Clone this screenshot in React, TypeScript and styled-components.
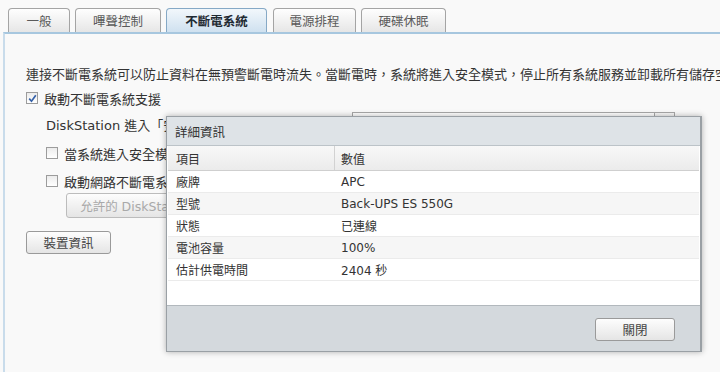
import styled, { createGlobalStyle } from "styled-components";

const GlobalStyle = createGlobalStyle`
  body {
    margin: 0;
    background: #f9f9f9;
    font-family: "DejaVu Sans", "Noto Sans CJK TC", sans-serif;
    color: #333;
  }
`;

const Page = styled.div`
  position: relative;
  width: 720px;
  height: 372px;
  overflow: hidden;
  padding: 8px 0 0 3px;
  box-sizing: border-box;
  font-size: 13px;
`;

const TabStrip = styled.div`
  display: flex;
  align-items: flex-end;
  padding-left: 5px;
  height: 24px;
`;

const Tab = styled.div<{ $w: number; $active?: boolean }>`
  width: ${(p) => p.$w}px;
  height: 24px;
  margin-right: ${(p) => (p.$active ? 6 : 5)}px;
  box-sizing: border-box;
  display: flex;
  align-items: center;
  justify-content: center;
  border: 1px solid ${(p) => (p.$active ? "#86a9c6" : "#a4a4a4")};
  border-bottom: none;
  border-radius: 4px 4px 0 0;
  background: ${(p) =>
    p.$active
      ? "linear-gradient(#f2f7fb, #cfe1f0)"
      : "linear-gradient(#fefefe, #e6e6e6)"};
  color: ${(p) => (p.$active ? "#1f2a33" : "#5a5a5a")};
  font-weight: ${(p) => (p.$active ? "bold" : "normal")};
  font-size: 12.5px;
`;

const Panel = styled.div`
  border-top: 2px solid #a7c7df;
  border-left: 2px solid #c9dceb;
  height: 340px;
  padding: 29px 0 0 21px;
  box-sizing: border-box;
`;

const Row = styled.div<{ $top: number; $indent?: number; $h?: number }>`
  display: flex;
  align-items: center;
  margin-top: ${(p) => p.$top}px;
  padding-left: ${(p) => p.$indent ?? 0}px;
  height: ${(p) => p.$h ?? 20}px;
  white-space: nowrap;
`;

const Box = styled.span`
  width: 12px;
  height: 12px;
  box-sizing: border-box;
  border: 1px solid #9c9c9c;
  background: linear-gradient(#ececec, #ffffff);
  display: inline-flex;
  align-items: center;
  justify-content: center;
  margin-right: 6px;
  flex: none;
`;

const Label = styled.span<{ $w?: number }>`
  width: ${(p) => (p.$w ? `${p.$w}px` : "auto")};
  flex: none;
`;

const Select = styled.div`
  width: 323px;
  height: 24px;
  box-sizing: border-box;
  border: 1px solid #a8a8a8;
  background: #fff;
  display: flex;
  justify-content: flex-end;
`;

const Trigger = styled.div`
  width: 19px;
  border-left: 1px solid #a8a8a8;
  background: linear-gradient(#f8f8f8, #e0e0e0);
`;

const Button = styled.div<{ $w: number; $h: number; $disabled?: boolean }>`
  width: ${(p) => p.$w}px;
  height: ${(p) => p.$h}px;
  box-sizing: border-box;
  border: 1px solid ${(p) => (p.$disabled ? "#bcbcbc" : "#9a9a9a")};
  border-radius: 3px;
  background: linear-gradient(#fdfdfd, #e5e5e5);
  color: ${(p) => (p.$disabled ? "#a9a9a9" : "#444")};
  display: flex;
  align-items: center;
  justify-content: center;
  font-size: 12.5px;
  flex: none;
`;

const Dialog = styled.div`
  position: absolute;
  left: 166px;
  top: 116px;
  width: 536px;
  height: 236px;
  box-sizing: border-box;
  border: 1px solid #9aa0a5;
  border-right-width: 2px;
  box-shadow: 0 0 6px rgba(0, 0, 0, 0.3);
  display: flex;
  flex-direction: column;
  background: #fff;
`;

const Title = styled.div`
  height: 28px;
  flex: none;
  display: flex;
  align-items: center;
  padding-left: 8px;
  background: #dee3e7;
  border-bottom: 1px solid #bcc3c8;
  font-size: 12.5px;
  color: #333;
`;

const Grid = styled.div`
  flex: 1;
  margin: 0 1px;
  background: #fff;
  font-size: 12px;
`;

const GridRow = styled.div<{ $alt?: boolean; $head?: boolean }>`
  display: grid;
  grid-template-columns: 166px 1fr;
  height: ${(p) => (p.$head ? 24 : 21)}px;
  border-bottom: 1px solid ${(p) => (p.$head ? "#cfcfcf" : "#ebebeb")};
  background: ${(p) =>
    p.$head
      ? "linear-gradient(#f8f8f8, #ebebeb)"
      : p.$alt
      ? "#f6f6f6"
      : "#fff"};
`;

const Cell = styled.div<{ $divider?: boolean }>`
  display: flex;
  align-items: center;
  padding-left: ${(p) => (p.$divider ? 6 : 8)}px;
  border-left: ${(p) => (p.$divider ? "1px solid #d2d2d2" : "none")};
  color: #333;
`;

const Footer = styled.div`
  height: 46px;
  flex: none;
  background: #d4d9dd;
  border-top: 1px solid #b2b8bd;
  display: flex;
  justify-content: flex-end;
  align-items: flex-start;
  padding: 12px 25px 0 0;
  box-sizing: border-box;
`;

const Check = () => (
  <svg width="9" height="9" viewBox="0 0 9 9">
    <path d="M1.2 4.6 L3.5 7.2 L7.8 1.2" fill="none" stroke="#3561a8" strokeWidth="1.7" />
  </svg>
);

const rows = [
  ["廠牌", "APC"],
  ["型號", "Back-UPS ES 550G"],
  ["狀態", "已連線"],
  ["電池容量", "100%"],
  ["估計供電時間", "2404 秒"],
];

const tabs: [string, number][] = [
  ["一般", 62],
  ["嗶聲控制", 86],
  ["不斷電系統", 101],
  ["電源排程", 83],
  ["硬碟休眠", 85],
];

export default function App() {
  return (
    <Page>
      <GlobalStyle />
      <TabStrip>
        {tabs.map(([name, w]) => (
          <Tab key={name} $w={w} $active={name === "不斷電系統"}>
            {name}
          </Tab>
        ))}
      </TabStrip>
      <Panel>
        <Row $top={0}>
          連接不斷電系統可以防止資料在無預警斷電時流失。當斷電時，系統將進入安全模式，停止所有系統服務並卸載所有儲存空間，以保護您的資料。
        </Row>
        <Row $top={5}>
          <Box>
            <Check />
          </Box>
          啟動不斷電系統支援
        </Row>
        <Row $top={4} $indent={20} $h={24}>
          <Label $w={306}>DiskStation 進入「安全模式」前的等待時間：</Label>
          <Select>
            <Trigger />
          </Select>
        </Row>
        <Row $top={7} $indent={20}>
          <Box />
          當系統進入安全模式時關閉不斷電系統
        </Row>
        <Row $top={8} $indent={20}>
          <Box />
          啟動網路不斷電系統伺服器
        </Row>
        <Row $top={2} $indent={40} $h={25}>
          <Button $w={170} $h={25} $disabled>
            允許的 DiskStation 裝置
          </Button>
        </Row>
        <Row $top={13} $h={22}>
          <Button $w={85} $h={23}>
            裝置資訊
          </Button>
        </Row>
      </Panel>
      <Dialog>
        <Title>詳細資訊</Title>
        <Grid>
          <GridRow $head>
            <Cell>項目</Cell>
            <Cell $divider>數值</Cell>
          </GridRow>
          {rows.map(([k, v], i) => (
            <GridRow key={k} $alt={i % 2 === 1}>
              <Cell>{k}</Cell>
              <Cell style={{ paddingLeft: 7 }}>{v}</Cell>
            </GridRow>
          ))}
        </Grid>
        <Footer>
          <Button $w={80} $h={23}>
            關閉
          </Button>
        </Footer>
      </Dialog>
    </Page>
  );
}
